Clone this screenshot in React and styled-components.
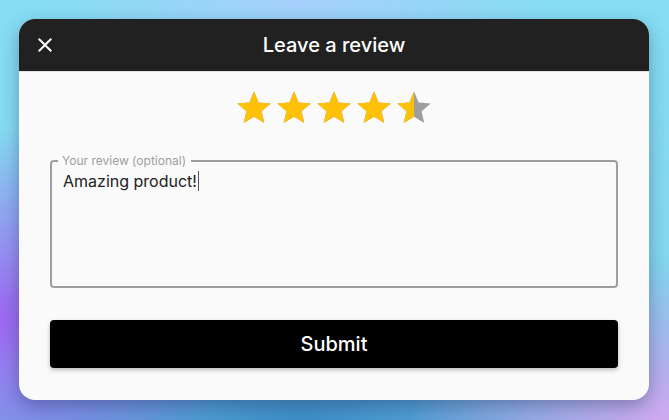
import React from 'react';
import styled, { createGlobalStyle } from 'styled-components';

const GlobalStyle = createGlobalStyle`
  html, body {
    margin: 0;
    padding: 0;
  }
  body {
    font-family: Inter, "Noto Sans", sans-serif;
  }
`;

const STAR = 'M12 17.27L18.18 21l-1.64-7.03L22 9.24l-7.19-.61L12 2 9.19 8.63 2 9.24l5.46 4.73L5.82 21z';

function Star({ fill, id }) {
  return (
    <svg width="40" height="40" viewBox="0 0 24 24">
      <defs>
        <clipPath id={id}>
          <rect x="0" y="0" width={24 * fill} height="24" />
        </clipPath>
      </defs>
      <path d={STAR} fill="#9e9e9e" />
      <path d={STAR} fill="#ffc107" clipPath={`url(#${id})`} />
    </svg>
  );
}

export default function App() {
  const rating = 4.5;
  return (
    <Page>
      <GlobalStyle />
      <Card>
        <Header>
          <CloseButton aria-label="Close">
            <svg width="24" height="24" viewBox="0 0 24 24">
              <path
                fill="#fff"
                d="M19 6.41L17.59 5 12 10.59 6.41 5 5 6.41 10.59 12 5 17.59 6.41 19 12 13.41 17.59 19 19 17.59 13.41 12z"
              />
            </svg>
          </CloseButton>
          <Title>Leave a review</Title>
          <span />
        </Header>
        <Body>
          <Stars>
            {[0, 1, 2, 3, 4].map((i) => (
              <Star key={i} id={`star-${i}`} fill={Math.max(0, Math.min(1, rating - i))} />
            ))}
          </Stars>
          <Field>
            <Legend>Your review (optional)</Legend>
            <Entry>
              Amazing product!<Caret />
            </Entry>
          </Field>
          <Submit>Submit</Submit>
        </Body>
      </Card>
    </Page>
  );
}

const Page = styled.div`
  width: 669px;
  height: 420px;
  box-sizing: border-box;
  padding: 19px 20px 20px 19px;
  background:
    radial-gradient(ellipse 240px 190px at 0% 76%, rgba(160, 98, 242, 0.95), rgba(160, 98, 242, 0) 100%),
    radial-gradient(ellipse 260px 160px at 100% 100%, rgba(214, 168, 240, 0.95), rgba(214, 168, 240, 0) 100%),
    radial-gradient(ellipse 320px 110px at 45% 100%, rgba(60, 140, 200, 0.95), rgba(60, 140, 200, 0) 100%),
    radial-gradient(ellipse 260px 60px at 45% 0%, rgba(170, 205, 252, 0.9), rgba(170, 205, 252, 0) 100%),
    linear-gradient(180deg, #86def4 0%, #84d8f0 60%, #6fb8e4 100%);
  overflow: hidden;
`;

const Card = styled.div`
  width: 630px;
  height: 381px;
  border-radius: 16px;
  overflow: hidden;
  background: #fafafa;
  box-shadow: 0 6px 18px rgba(20, 30, 70, 0.35);
  display: flex;
  flex-direction: column;
`;

const Header = styled.div`
  height: 52px;
  background: #212121;
  display: grid;
  grid-template-columns: 1fr auto 1fr;
  align-items: center;
  padding: 0 14px;
  border-bottom: 1px solid #e0e0e0;
`;

const CloseButton = styled.button`
  width: 24px;
  height: 24px;
  padding: 0;
  border: none;
  background: none;
  display: flex;
  cursor: pointer;
`;

const Title = styled.h1`
  margin: 0;
  color: #fff;
  font-size: 20px;
  font-weight: 500;
  letter-spacing: 0;
`;

const Body = styled.div`
  flex: 1;
  display: flex;
  flex-direction: column;
  padding: 16px 31px 32px;
`;

const Stars = styled.div`
  display: flex;
  justify-content: center;
  height: 40px;
`;

const Field = styled.fieldset`
  margin: 26px 0 0;
  padding: 1px 8px 8px 6px;
  border: 2px solid #9e9e9e;
  border-radius: 4px;
  min-width: 0;
`;

const Legend = styled.legend`
  padding: 0 5px 0 4px;
  font-size: 12px;
  line-height: 14px;
  color: #9e9e9e;
`;

const Entry = styled.div`
  height: 109px;
  padding-left: 5px;
  font-size: 16px;
  line-height: 24px;
  color: #212121;
`;

const Caret = styled.span`
  display: inline-block;
  width: 1px;
  height: 20px;
  margin-left: 1px;
  vertical-align: -4px;
  background: #555;
`;

const Submit = styled.button`
  margin-top: 32px;
  height: 48px;
  border: none;
  border-radius: 4px;
  background: #000;
  color: #fff;
  font-family: Inter, "Noto Sans", sans-serif;
  font-size: 20px;
  font-weight: 500;
  box-shadow: 0 2px 4px rgba(0, 0, 0, 0.25);
  cursor: pointer;
`;
